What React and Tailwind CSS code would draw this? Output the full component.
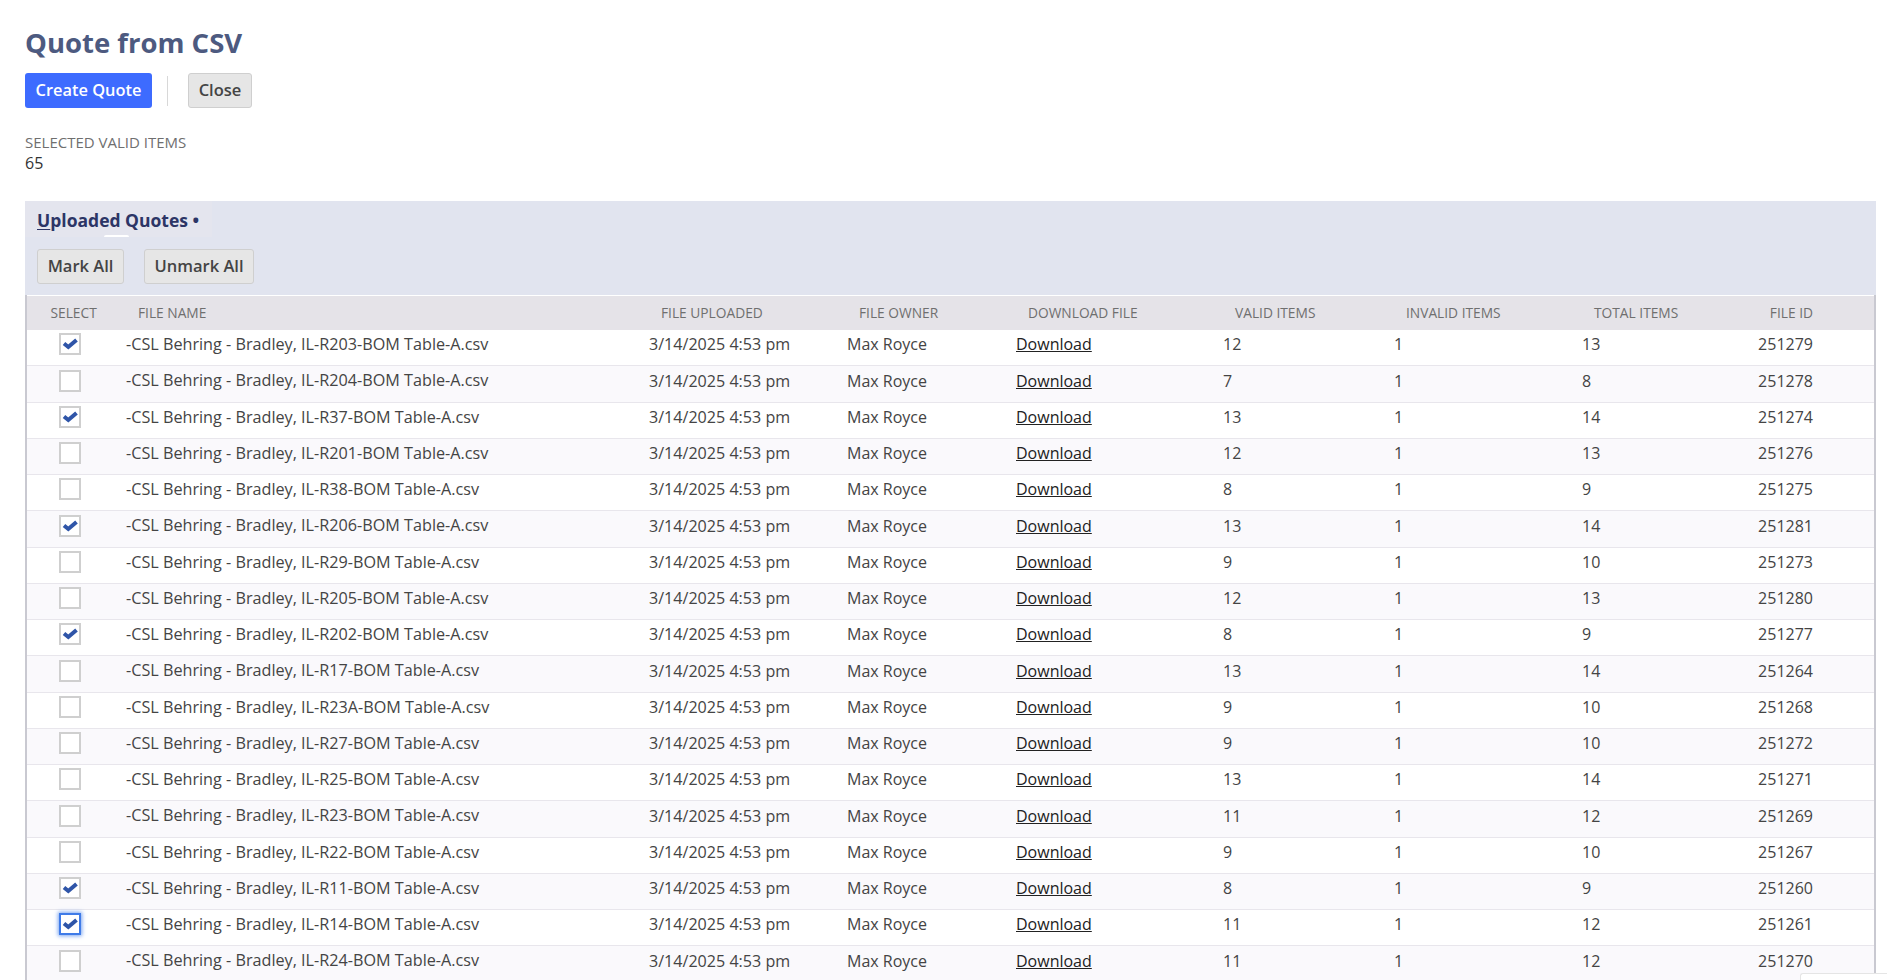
import React from "react";

const rows = [
  ["R203", "3/14/2025 4:53 pm", 12, 13, 251279, true],
  ["R204", "3/14/2025 4:53 pm", 7, 8, 251278, false],
  ["R37", "3/14/2025 4:53 pm", 13, 14, 251274, true],
  ["R201", "3/14/2025 4:53 pm", 12, 13, 251276, false],
  ["R38", "3/14/2025 4:53 pm", 8, 9, 251275, false],
  ["R206", "3/14/2025 4:53 pm", 13, 14, 251281, true],
  ["R29", "3/14/2025 4:53 pm", 9, 10, 251273, false],
  ["R205", "3/14/2025 4:53 pm", 12, 13, 251280, false],
  ["R202", "3/14/2025 4:53 pm", 8, 9, 251277, true],
  ["R17", "3/14/2025 4:53 pm", 13, 14, 251264, false],
  ["R23A", "3/14/2025 4:53 pm", 9, 10, 251268, false],
  ["R27", "3/14/2025 4:53 pm", 9, 10, 251272, false],
  ["R25", "3/14/2025 4:53 pm", 13, 14, 251271, false],
  ["R23", "3/14/2025 4:53 pm", 11, 12, 251269, false],
  ["R22", "3/14/2025 4:53 pm", 9, 10, 251267, false],
  ["R11", "3/14/2025 4:53 pm", 8, 9, 251260, true],
  ["R14", "3/14/2025 4:53 pm", 11, 12, 251261, true, true],
  ["R24", "3/14/2025 4:53 pm", 11, 12, 251270, false],
];

function Checkbox({ checked, focused }) {
  return (
    <div
      className={`w-[22px] h-[22px] bg-white flex items-center justify-center border-2 ${
        focused ? "border-[#3f7be8] shadow-[0_0_4px_1px_#7aa5f0]" : "border-[#cfcfcf]"
      }`}
    >
      {checked && (
        <svg width="16" height="14" viewBox="0 0 16 14">
          <path d="M2 6.5 L6.3 10 L14.5 3" fill="none" stroke="#2f55a8" strokeWidth="4" />
        </svg>
      )}
    </div>
  );
}

const GRID = "grid grid-cols-[99px_523px_198px_169px_207px_171px_188px_167px_64px]";

export default function App() {
  return (
    <div className="h-[980px] overflow-hidden bg-white relative font-['Open_Sans',sans-serif] text-[16px] text-[#444444] pl-[25px] pr-[11px]">
      <h1 className="text-[27.5px] leading-[36px] font-bold text-[#4d5a80] pt-[25px] h-[60px]">Quote from CSV</h1>
      <div className="flex items-center mt-[13px] h-[35px]">
        <button className="h-[35px] w-[127px] rounded-[3px] bg-[#3d6bff] text-white text-[16.4px] font-semibold">Create Quote</button>
        <div className="w-px h-[30px] bg-[#d8d8d8] ml-[15px] mr-[20px]" />
        <button className="h-[35px] w-[64px] rounded-[3px] border border-[#cfcfcf] bg-[#e6e6e6] text-[16.5px] font-semibold text-[#444444]">Close</button>
      </div>
      <div className="mt-[24px] text-[15px] leading-[20px] text-[#6f6f6f]">SELECTED VALID ITEMS</div>
      <div className="text-[16px] leading-[22px] text-[#333333]">65</div>

      <div className="mt-[27px] bg-[#e1e4ef]">
        <div className="h-[36px] w-[187px] bg-[#e4e5ee] pl-[12px] text-[17.5px] font-bold leading-[38px] text-[#2c3566] relative">
          <span className="underline underline-offset-2 decoration-1">U</span>ploaded Quotes •
          <div className="absolute left-[79px] bottom-0 w-[25px] h-[2px] bg-white rounded-t-full" />
        </div>
        <div className="flex gap-[20px] pl-[12px] pt-[12px] h-[58px]">
          <button className="h-[35px] w-[87px] rounded-[3px] border border-[#cfcfcf] bg-[#e6e6e6] text-[16.5px] font-semibold">Mark All</button>
          <button className="h-[35px] w-[110px] rounded-[3px] border border-[#cfcfcf] bg-[#e6e6e6] text-[16.5px] font-semibold">Unmark All</button>
        </div>
      </div>

      <div className="border-l-2 border-r-2 border-[#c9c9d1]">
        <div className={`${GRID} h-[35px] items-center bg-[#e5e3e8] border-t border-white text-[13.75px] text-[#6f6f6f]`}>
          <div className="pl-[23.5px]">SELECT</div>
          <div className="pl-[12px]">FILE NAME</div>
          <div className="pl-[12px]">FILE UPLOADED</div>
          <div className="pl-[12px]">FILE OWNER</div>
          <div className="pl-[12px]">DOWNLOAD FILE</div>
          <div className="pl-[12px]">VALID ITEMS</div>
          <div className="pl-[12px]">INVALID ITEMS</div>
          <div className="pl-[12px]">TOTAL ITEMS</div>
          <div className="text-right">FILE ID</div>
        </div>
        {rows.map((r, i) => (
          <div
            key={r[0]}
            className={`${GRID} h-[36.25px] items-center border-b border-[#e8e6ec] pb-[6.5px] ${i % 2 ? "bg-[#faf9fc]" : "bg-white"}`}
          >
            <div className="pl-[32px]">
              <Checkbox checked={r[5]} focused={r[6]} />
            </div>
            <div className="text-[16.2px]">-CSL Behring - Bradley, IL-{r[0]}-BOM Table-A.csv</div>
            <div className="text-[16.1px]">{r[1]}</div>
            <div>Max Royce</div>
            <div className="text-[#222222] underline">Download</div>
            <div>{r[2]}</div>
            <div>1</div>
            <div>{r[3]}</div>
            <div className="text-right">{r[4]}</div>
          </div>
        ))}
      </div>
      <div className="absolute left-[1800px] top-[973px] w-[87px] h-[7px] bg-white border-t border-l border-[#e5e5e5] rounded-tl-[3px]" />
    </div>
  );
}
